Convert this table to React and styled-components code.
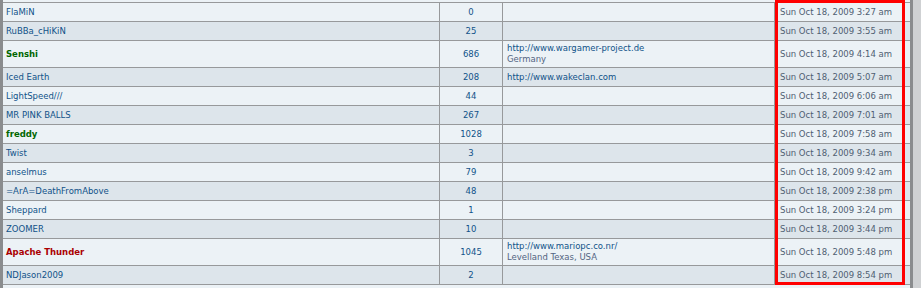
import styled, { createGlobalStyle } from "styled-components";

const members = [
  { name: "FlaMiN", posts: 0, joined: "Sun Oct 18, 2009 3:27 am" },
  { name: "RuBBa_cHiKiN", posts: 25, joined: "Sun Oct 18, 2009 3:55 am" },
  {
    name: "Senshi",
    rank: "mod",
    posts: 686,
    site: "http://www.wargamer-project.de",
    location: "Germany",
    joined: "Sun Oct 18, 2009 4:14 am",
  },
  {
    name: "Iced Earth",
    posts: 208,
    site: "http://www.wakeclan.com",
    joined: "Sun Oct 18, 2009 5:07 am",
  },
  { name: "LightSpeed///", posts: 44, joined: "Sun Oct 18, 2009 6:06 am" },
  { name: "MR PINK BALLS", posts: 267, joined: "Sun Oct 18, 2009 7:01 am" },
  { name: "freddy", rank: "mod", posts: 1028, joined: "Sun Oct 18, 2009 7:58 am" },
  { name: "Twist", posts: 3, joined: "Sun Oct 18, 2009 9:34 am" },
  { name: "anselmus", posts: 79, joined: "Sun Oct 18, 2009 9:42 am" },
  { name: "=ArA=DeathFromAbove", posts: 48, joined: "Sun Oct 18, 2009 2:38 pm" },
  { name: "Sheppard", posts: 1, joined: "Sun Oct 18, 2009 3:24 pm" },
  { name: "ZOOMER", posts: 10, joined: "Sun Oct 18, 2009 3:44 pm" },
  {
    name: "Apache Thunder",
    rank: "admin",
    posts: 1045,
    site: "http://www.mariopc.co.nr/",
    location: "Levelland Texas, USA",
    joined: "Sun Oct 18, 2009 5:48 pm",
  },
  { name: "NDJason2009", posts: 2, joined: "Sun Oct 18, 2009 8:54 pm" },
];

const GlobalStyle = createGlobalStyle`
  body {
    margin: 0;
    background: #cfd1d3;
    font-family: "DejaVu Sans", Verdana, sans-serif;
  }
`;

const Page = styled.div`
  position: relative;
  width: 921px;
  height: 288px;
  overflow: hidden;
`;

const Table = styled.div`
  width: 913px;
  box-sizing: border-box;
  padding-top: 2px;
  background: #ecf2f6;
  border-left: 3px solid #8a8c8e;
  border-right: 3px solid #8a8c8e;
`;

const Row = styled.div`
  display: grid;
  grid-template-columns: 436px 63px 272px 1fr;
  height: ${({ $tall }) => ($tall ? "26px" : "18px")};
  border-top: 1px solid #97999b;
  background: ${({ $alt }) => ($alt ? "#dde5eb" : "#ecf2f6")};
`;

const Cell = styled.div`
  display: flex;
  flex-direction: column;
  justify-content: center;
  padding: 0 ${({ $pad }) => $pad || 3}px;
  font-size: 8.5px;
  line-height: 11px;
  white-space: nowrap;
  overflow: hidden;
  text-align: ${({ $center }) => ($center ? "center" : "left")};
  & + & {
    border-left: 1px solid #97999b;
  }
`;

const rankColors = {
  mod: "#006600",
  admin: "#aa0000",
};

const Name = styled.a`
  color: ${({ $rank }) => rankColors[$rank] || "#105289"};
  font-weight: ${({ $rank }) => ($rank ? "bold" : "normal")};
  text-decoration: none;
`;

const Posts = styled.a`
  color: #105289;
  text-decoration: none;
`;

const Site = styled.a`
  color: #105289;
  text-decoration: none;
`;

const Location = styled.span`
  color: #536482;
`;

const Joined = styled.span`
  color: #4f5e72;
`;

const Highlight = styled.div`
  position: absolute;
  left: 775px;
  top: 0;
  width: 130px;
  height: 285px;
  box-sizing: border-box;
  border: 3px solid #ff0000;
  pointer-events: none;
`;

export default function App() {
  return (
    <Page>
      <GlobalStyle />
      <Table>
        {members.map((m, i) => (
          <Row key={m.name} $alt={i % 2 === 1} $tall={!!m.location}>
            <Cell>
              <Name $rank={m.rank}>{m.name}</Name>
            </Cell>
            <Cell $center>
              <Posts>{m.posts}</Posts>
            </Cell>
            <Cell $pad={4}>
              {m.site && <Site>{m.site}</Site>}
              {m.location && <Location>{m.location}</Location>}
            </Cell>
            <Cell $pad={5}>
              <Joined>{m.joined}</Joined>
            </Cell>
          </Row>
        ))}
        <Row />
      </Table>
      <Highlight />
    </Page>
  );
}
